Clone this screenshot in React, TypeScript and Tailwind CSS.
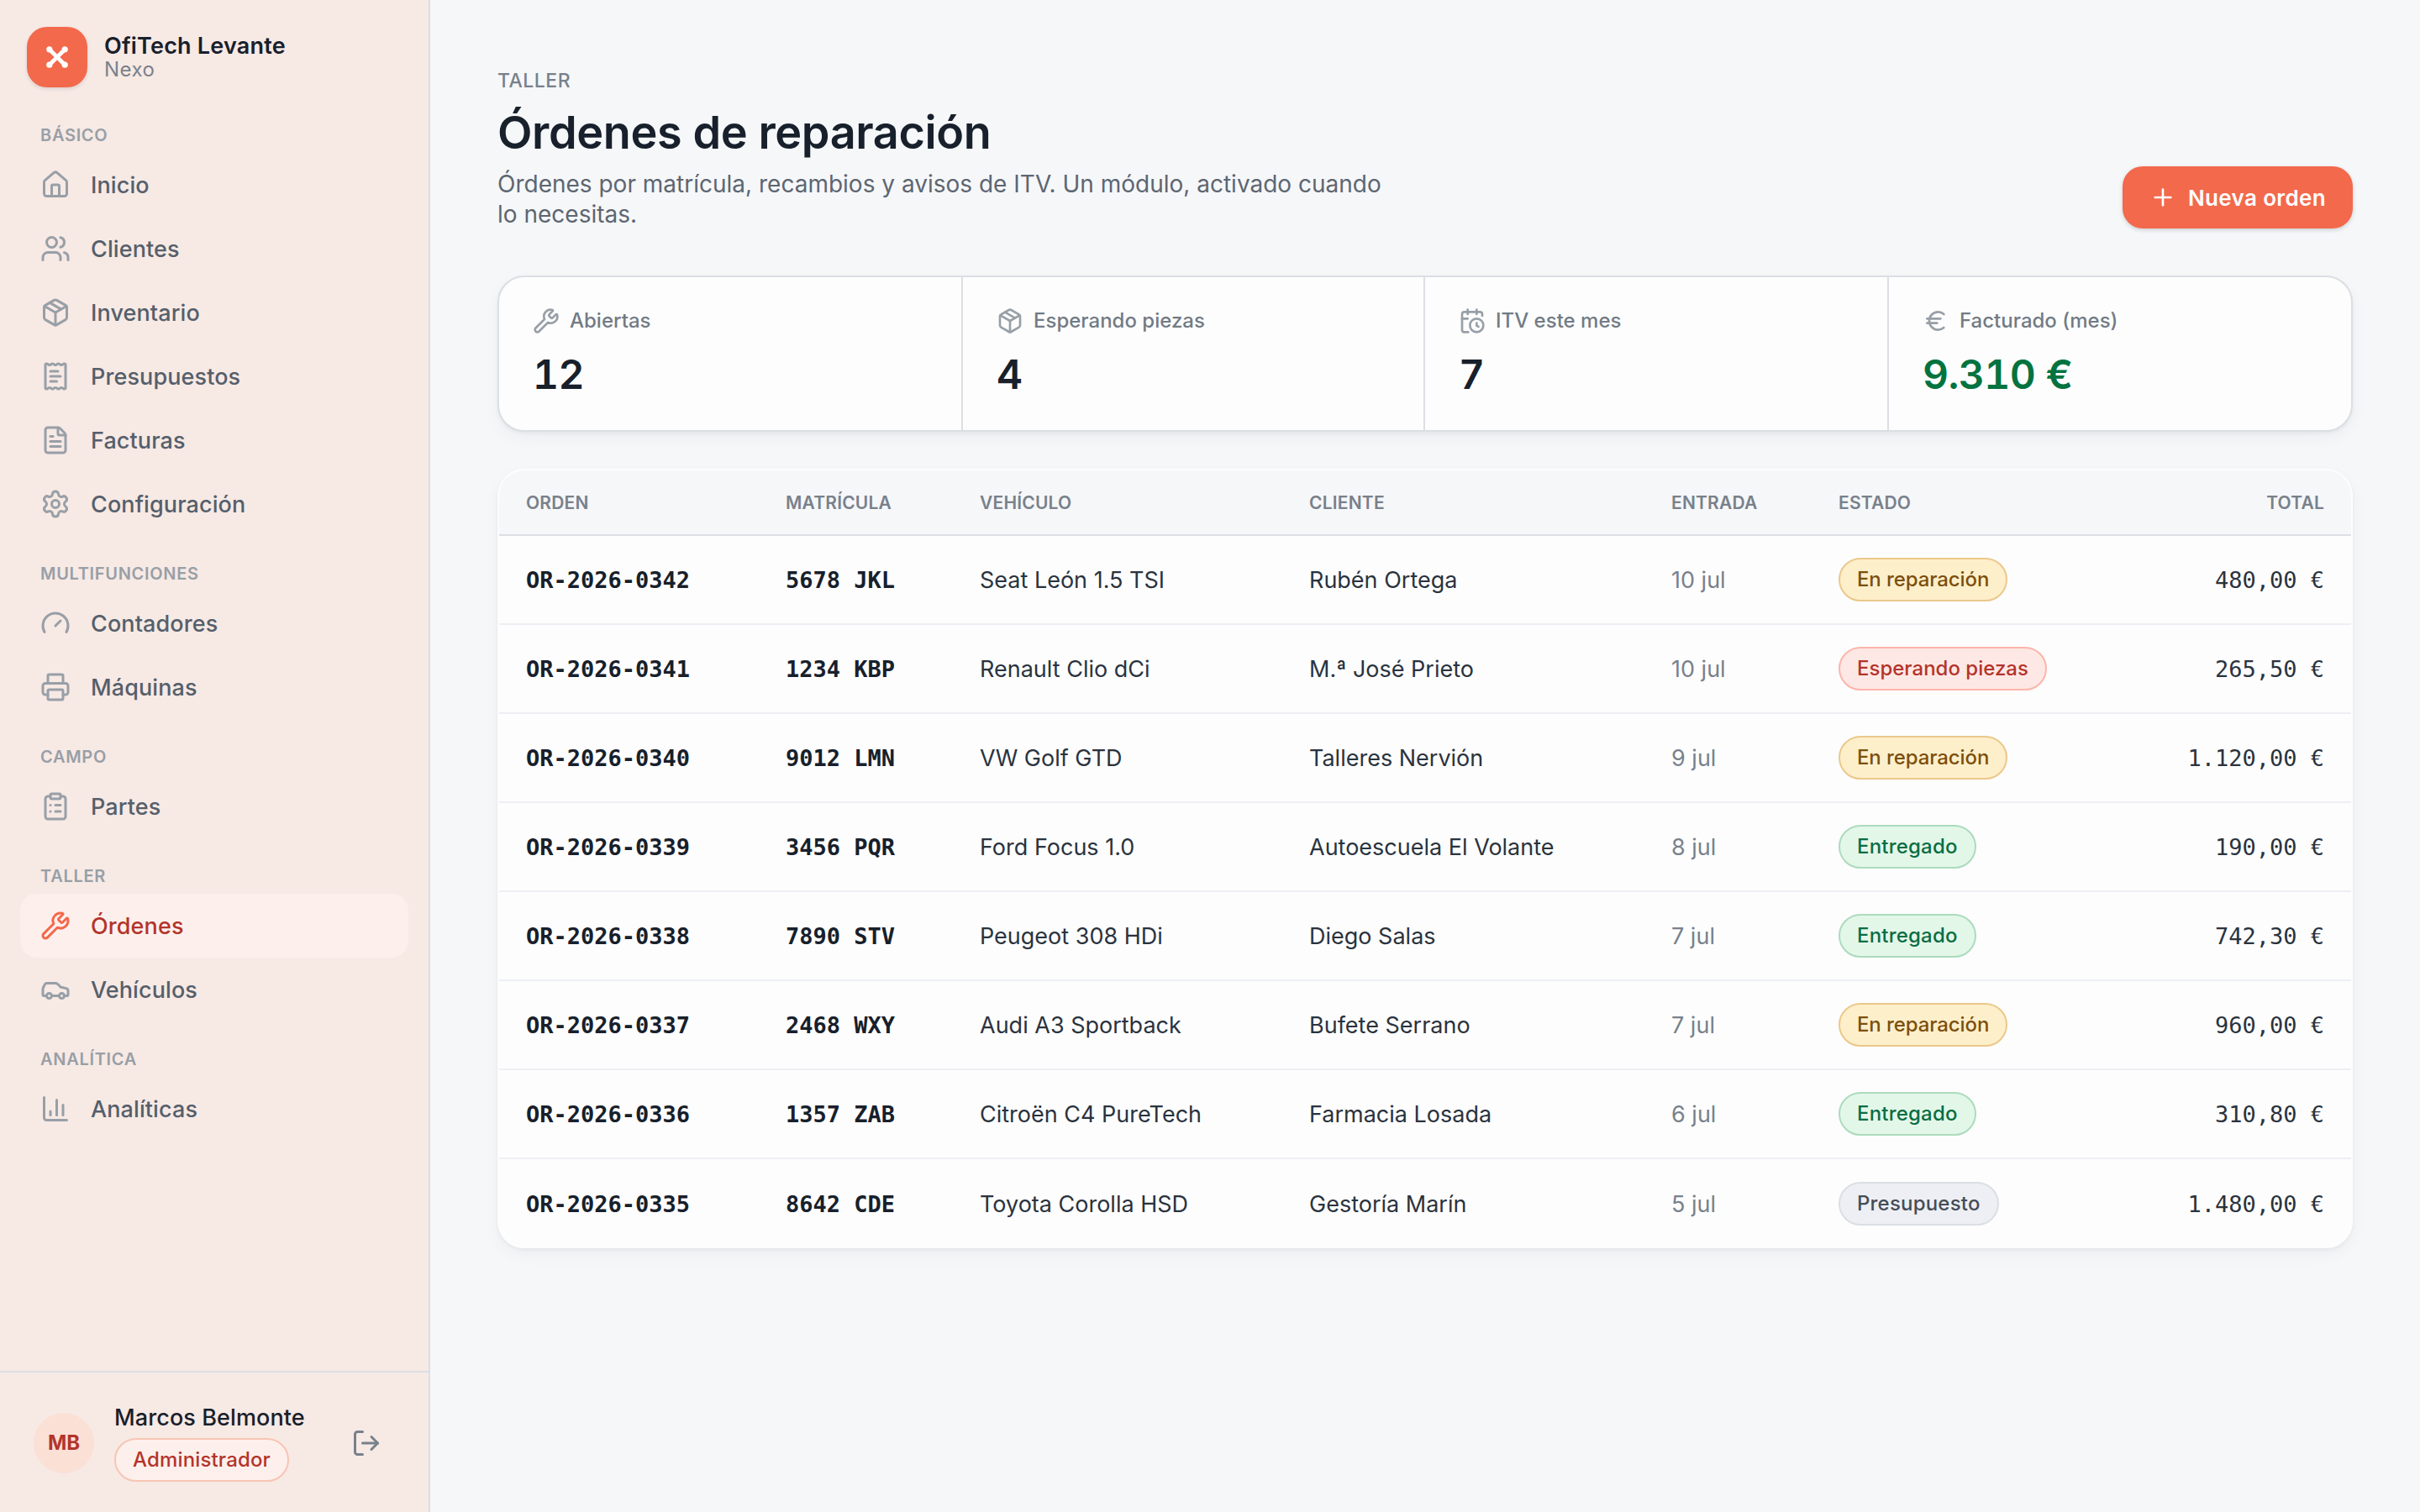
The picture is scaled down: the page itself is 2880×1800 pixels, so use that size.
import React from "react";
import {
  House, Users, Package, ReceiptText, FileText, Settings, Gauge, Printer, ClipboardList,
  Wrench, ChartColumn, LogOut, Plus, CalendarClock, Euro,
} from "lucide-react";

type IconType = React.ComponentType<{ className?: string; strokeWidth?: number }>;

const Car: IconType = ({ className, strokeWidth = 2 }) => (
  <svg viewBox="0 0 24 24" fill="none" stroke="currentColor" strokeWidth={strokeWidth} strokeLinecap="round" strokeLinejoin="round" className={className}>
    <path d="M19 17h2c.6 0 1-.4 1-1v-3c0-.9-.7-1.7-1.5-1.9L16 10s-1.3-1.4-2.2-2.3c-.5-.4-1.1-.7-1.8-.7H5c-.6 0-1.1.4-1.4.9l-1.4 2.9A3.7 3.7 0 0 0 2 12v4c0 .6.4 1 1 1h2" />
    <circle cx="7" cy="17" r="2" />
    <path d="M9 17h6" />
    <circle cx="17" cy="17" r="2" />
  </svg>
);

const groups: { label: string; items: { label: string; icon: IconType; active?: boolean }[] }[] = [
  {
    label: "BÁSICO",
    items: [
      { label: "Inicio", icon: House },
      { label: "Clientes", icon: Users },
      { label: "Inventario", icon: Package },
      { label: "Presupuestos", icon: ReceiptText },
      { label: "Facturas", icon: FileText },
      { label: "Configuración", icon: Settings },
    ],
  },
  { label: "MULTIFUNCIONES", items: [{ label: "Contadores", icon: Gauge }, { label: "Máquinas", icon: Printer }] },
  { label: "CAMPO", items: [{ label: "Partes", icon: ClipboardList }] },
  { label: "TALLER", items: [{ label: "Órdenes", icon: Wrench, active: true }, { label: "Vehículos", icon: Car }] },
  { label: "ANALÍTICA", items: [{ label: "Analíticas", icon: ChartColumn }] },
];

const stats = [
  { label: "Abiertas", value: "12", icon: Wrench, color: "text-[#17202b]" },
  { label: "Esperando piezas", value: "4", icon: Package, color: "text-[#17202b]" },
  { label: "ITV este mes", value: "7", icon: CalendarClock, color: "text-[#17202b]" },
  { label: "Facturado (mes)", value: "9.310 €", icon: Euro, color: "text-[#03733f]" },
];

const tones: Record<string, string> = {
  "En reparación": "bg-[#feefcb] border-[#ebc88b] text-[#7c4f0c] tracking-[-0.1px]",
  "Esperando piezas": "bg-[#fee8e5] border-[#fdb4ab] text-[#b3342b]",
  Entregado: "bg-[#e3f7e9] border-[#acdbbd] text-[#0a6d43] tracking-[0.2px]",
  Presupuesto: "bg-[#eeeff4] border-[#dbdee4] text-[#454d57] tracking-[0.2px]",
};

const rows = [
  ["OR-2026-0342", "5678 JKL", "Seat León 1.5 TSI", "Rubén Ortega", "10 jul", "En reparación", "480,00 €"],
  ["OR-2026-0341", "1234 KBP", "Renault Clio dCi", "M.ª José Prieto", "10 jul", "Esperando piezas", "265,50 €"],
  ["OR-2026-0340", "9012 LMN", "VW Golf GTD", "Talleres Nervión", "9 jul", "En reparación", "1.120,00 €"],
  ["OR-2026-0339", "3456 PQR", "Ford Focus 1.0", "Autoescuela El Volante", "8 jul", "Entregado", "190,00 €"],
  ["OR-2026-0338", "7890 STV", "Peugeot 308 HDi", "Diego Salas", "7 jul", "Entregado", "742,30 €"],
  ["OR-2026-0337", "2468 WXY", "Audi A3 Sportback", "Bufete Serrano", "7 jul", "En reparación", "960,00 €"],
  ["OR-2026-0336", "1357 ZAB", "Citroën C4 PureTech", "Farmacia Losada", "6 jul", "Entregado", "310,80 €"],
  ["OR-2026-0335", "8642 CDE", "Toyota Corolla HSD", "Gestoría Marín", "5 jul", "Presupuesto", "1.480,00 €"],
];

const columns = "grid grid-cols-[309px_231px_392px_431px_199px_1fr_auto] items-center px-8";

function Sidebar() {
  return (
    <aside className="flex h-full w-[512px] shrink-0 flex-col border-r-2 border-[#dbdee4] bg-[#f7e9e4]">
      <div className="flex h-[116px] items-start gap-5 pl-8 pt-8">
        <div className="flex size-[72px] items-center justify-center rounded-[24px] bg-[#f3694c] text-white shadow-[0_2px_4px_rgba(23,32,43,0.12)]">
          <svg viewBox="0 0 26 26" className="size-[26px]" fill="currentColor" stroke="currentColor">
            <path d="M4 4L22 22M22 4L4 22" strokeWidth="4.6" strokeLinecap="round" />
            <circle cx="3.8" cy="3.8" r="3.6" stroke="none" />
            <circle cx="22.2" cy="3.8" r="3.6" stroke="none" />
            <circle cx="3.8" cy="22.2" r="3.6" stroke="none" />
            <circle cx="22.2" cy="22.2" r="3.6" stroke="none" />
          </svg>
        </div>
        <div className="pt-2">
          <div className="text-[27px] font-semibold leading-[30px] tracking-[0.2px] text-[#17202b]">OfiTech Levante</div>
          <div className="text-[24px] leading-[25px] tracking-[0.5px] text-[#7a828b]">Nexo</div>
        </div>
      </div>
      <nav className="flex-1 px-6">
        {groups.map((g) => (
          <div key={g.label}>
            <div className="flex h-[66px] items-end pb-[9px] pl-6 text-[20px] font-semibold leading-6 tracking-[0.7px] text-[#989fa7]">{g.label}</div>
            {g.items.map(({ label, icon: Icon, active }) => (
              <div
                key={label}
                className={
                  active
                    ? "flex h-[76px] w-[462px] items-center gap-6 rounded-[20px] bg-[#fdf0ec] pl-6 text-[#b3342b]"
                    : "flex h-[76px] w-[462px] items-center gap-6 rounded-[20px] pl-6 text-[#555f6b]"
                }
              >
                <Icon className={active ? "size-9 text-[#f3694c]" : "size-9 text-[#989fa7]"} strokeWidth={2} />
                <span className="pt-[3px] text-[27px] font-medium tracking-[0.1px]">{label}</span>
              </div>
            ))}
          </div>
        ))}
      </nav>
      <div className="flex h-[168px] items-center border-t-2 border-[#dbdee4] pl-10 pr-14 pt-[2px]">
        <div className="flex size-[72px] items-center justify-center rounded-full bg-[#fae0d5] text-[24px] font-bold text-[#b3342b]">MB</div>
        <div className="-mt-0.5 ml-6 flex flex-1 flex-col items-start">
          <div className="text-[27px] font-medium leading-[36px] tracking-[0.1px] text-[#17202b]">Marcos Belmonte</div>
          <div className="mt-[6px] flex h-[52px] items-center rounded-full border-2 border-[#f8c5b4] bg-[#fdf0ec] px-5 text-[24px] font-medium tracking-[0.15px] text-[#b3342b]">Administrador</div>
        </div>
        <LogOut className="size-9 text-[#78818b]" strokeWidth={2} />
      </div>
    </aside>
  );
}

export default function App() {
  return (
    <div className="flex h-[1800px] w-[2880px] overflow-hidden bg-[#f6f7f9] font-['Inter',sans-serif] text-[#17202b]">
      <Sidebar />
      <main className="flex-1 px-20 pt-20">
        <header className="flex h-[192px] items-end justify-between">
          <div className="h-full w-[1100px]">
            <div className="text-[23px] font-medium leading-8 tracking-[0.5px] text-[#78818b]">TALLER</div>
            <h1 className="mt-3 text-[54px] font-semibold leading-[68px] tracking-[-0.4px]">Órdenes de reparación</h1>
            <p className="mt-[9px] text-[28px] leading-[36.4px] text-[#5d6671]">
              Órdenes por matrícula, recambios y avisos de ITV. Un módulo, activado cuando
              <br />
              lo necesitas.
            </p>
          </div>
          <button className="flex h-[74px] w-[274px] items-center gap-[14px] rounded-[24px] bg-[#f3694c] pl-8 text-[26px] font-semibold tracking-[0.35px] text-white shadow-[0_2px_5px_rgba(23,32,43,0.18)]">
            <Plus className="size-8" strokeWidth={2} />
            Nueva orden
          </button>
        </header>

        <section className="mt-14 grid h-[186px] grid-cols-[550px_550px_552px_1fr] rounded-[32px] border-2 border-[#dbdfe3] bg-[#fdfdfd] shadow-[0_2px_4px_rgba(23,32,43,0.05),0_8px_20px_rgba(23,32,43,0.04)]">
          {stats.map(({ label, value, icon: Icon, color }, i) => (
            <div key={label} className={i ? "border-l-2 border-[#dbdfe3] pl-10 pt-[34px]" : "pl-10 pt-[34px]"}>
              <div className="flex h-9 items-center gap-3 text-[24px] font-medium text-[#727b85]">
                <Icon className="size-8 text-[#989fa7]" strokeWidth={2} />
                {label}
              </div>
              <div className={`mt-[14px] text-[48px] font-semibold leading-[64px] tracking-[-0.6px] tabular-nums ${color}`}>{value}</div>
            </div>
          ))}
        </section>

        <section className="mt-11 h-[928px] overflow-hidden rounded-[32px] border-2 border-[#fdfdfd] bg-[#fdfdfd] shadow-[0_2px_4px_rgba(23,32,43,0.05),0_8px_20px_rgba(23,32,43,0.04)]">
          <div className={`${columns} h-[78px] border-b-2 border-[#dbdfe3] bg-[#f6f7f9] pt-[2px] text-[21px] font-semibold tracking-[0.2px] text-[#78818b]`}>
            <span>ORDEN</span>
            <span>MATRÍCULA</span>
            <span>VEHÍCULO</span>
            <span>CLIENTE</span>
            <span>ENTRADA</span>
            <span>ESTADO</span>
            <span>TOTAL</span>
          </div>
          {rows.map(([order, plate, vehicle, client, date, status, total]) => (
            <div key={order} className={`${columns} h-[106px] border-b-2 border-[#eeeff4] text-[27px] text-[#2a333e] last:border-b-0`}>
              <span className="pt-[2px] font-['DejaVu_Sans_Mono',monospace] text-[27px] font-bold text-[#17202b]">{order}</span>
              <span className="pt-[2px] font-['DejaVu_Sans_Mono',monospace] text-[27px] font-bold text-[#17202b]">{plate}</span>
              <span className="pt-[2px]">{vehicle}</span>
              <span className="pt-[2px]">{client}</span>
              <span className="pt-[2px] text-[#78818b]">{date}</span>
              <span className="flex">
                <span className={`flex h-[52px] items-center rounded-full border-2 px-5 text-[24px] font-medium ${tones[status]}`}>{status}</span>
              </span>
              <span className="pt-[2px] font-['DejaVu_Sans_Mono',monospace] text-[27px]">{total}</span>
            </div>
          ))}
        </section>
      </main>
    </div>
  );
}
